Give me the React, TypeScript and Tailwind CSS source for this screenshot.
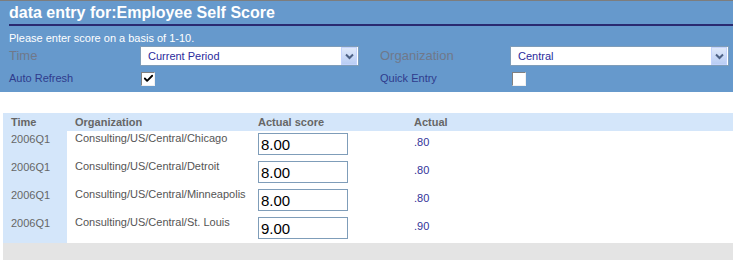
import { Check } from "lucide-react";

const rows = [
  { time: "2006Q1", org: "Consulting/US/Central/Chicago", score: "8.00", actual: ".80" },
  { time: "2006Q1", org: "Consulting/US/Central/Detroit", score: "8.00", actual: ".80" },
  { time: "2006Q1", org: "Consulting/US/Central/Minneapolis", score: "8.00", actual: ".80" },
  { time: "2006Q1", org: "Consulting/US/Central/St. Louis", score: "9.00", actual: ".90" },
];

function Select({ value }: { value: string }) {
  return (
    <div className="w-[219px] h-[20px] bg-white border border-[#7f9db9] flex items-center justify-between">
      <span className="pl-[7px] text-[11px] text-[#2b2b9c]">{value}</span>
      <span className="w-[16px] h-[18px] mr-[1px] bg-gradient-to-b from-[#dfe9fb] to-[#b9cdf4] border border-[#c3d3fd] flex items-center justify-center">
        <svg width="9" height="7" viewBox="0 0 9 7">
          <path d="M1 1.5 L4.5 5 L8 1.5" fill="none" stroke="#4d6185" strokeWidth="2" />
        </svg>
      </span>
    </div>
  );
}

function Checkbox({ checked }: { checked: boolean }) {
  return (
    <div className="w-[14px] h-[14px] bg-white border border-t-[#808080] border-l-[#808080] border-r-[#f0f0f0] border-b-[#f0f0f0] flex items-center justify-center">
      {checked && <Check size={11} strokeWidth={4} className="text-black" />}
    </div>
  );
}

export default function App() {
  return (
    <div className="w-[733px] h-[260px] bg-white font-['Liberation_Sans',Arial,sans-serif] overflow-hidden">
      <div className="bg-[#6699cc] border-t border-[#7d7d7d] h-[92px]">
        <h1 className="pl-[9px] pt-[2px] h-[23px] text-[16px] leading-[19px] font-bold text-white">
          data entry for:Employee Self Score
        </h1>
        <div className="ml-[9px] h-[2px] bg-[#2a2a70]" />
        <p className="pl-[9px] pt-[6px] text-[11px] leading-[13px] text-white">
          Please enter score on a basis of 1-10.
        </p>
        <div className="flex items-center mt-[1px] h-[20px]">
          <div className="w-[140px] pl-[9px] text-[13px] leading-[16px] text-[#70788a]">Time</div>
          <Select value="Current Period" />
          <div className="w-[151px] pl-[21px] text-[13px] leading-[16px] text-[#70788a]">Organization</div>
          <Select value="Central" />
        </div>
        <div className="flex items-center mt-[5px] h-[15px]">
          <div className="w-[141px] pl-[9px] text-[11px] text-[#2f3b8c]">Auto Refresh</div>
          <Checkbox checked />
          <div className="w-[225px]" />
          <div className="w-[132px] text-[11px] text-[#2f3b8c]">Quick Entry</div>
          <Checkbox checked={false} />
        </div>
      </div>

      <div className="ml-[3px] mt-[21px]">
        <div className="h-[18px] bg-[#d4e6fa] flex items-center text-[11px] font-bold text-[#666666]">
          <span className="w-[72px] pl-[8px]">Time</span>
          <span className="w-[183px]">Organization</span>
          <span className="w-[156px]">Actual score</span>
          <span>Actual</span>
        </div>
        {rows.map((r, i) => (
          <div key={i} className="flex h-[28px]">
            <div className="w-[64px] bg-[#d4e6fa] pl-[8px] pt-[2px] text-[11px] leading-[13px] text-[#666666]">{r.time}</div>
            <div className="flex-1 flex">
              <span className="w-[191px] pl-[8px] pt-[1px] text-[11px] leading-[13px] text-[#555555]">{r.org}</span>
              <div className="w-[156px] pt-[2px]">
                <div className="w-[90px] h-[22px] border border-[#7f9db9] bg-white text-[15px] leading-[20px] pl-[2px] pt-[1px] text-black">
                  {r.score}
                </div>
              </div>
              <span className="pt-[5px] text-[11px] leading-[13px] text-[#333399]">{r.actual}</span>
            </div>
          </div>
        ))}
        <div className="h-[20px] bg-[#e4e4e4]" />
      </div>
    </div>
  );
}
